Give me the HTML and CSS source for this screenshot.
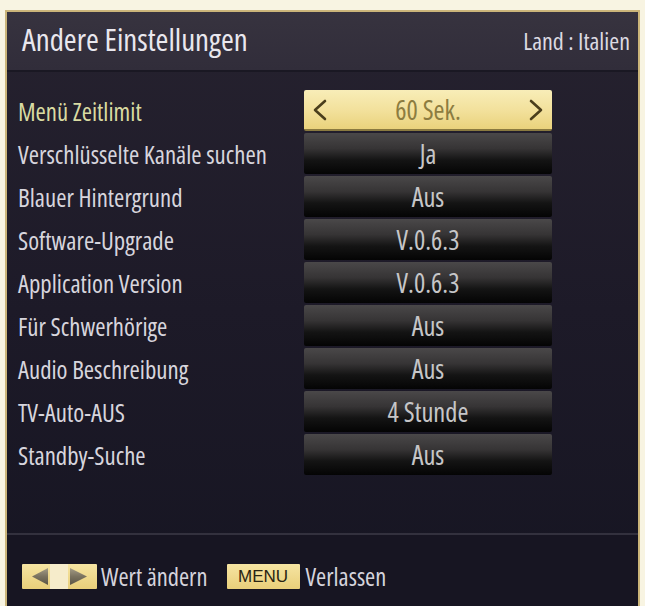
FILE: index.html
```html
<!DOCTYPE html>
<html lang="de">
<head>
<meta charset="utf-8">
<title>Andere Einstellungen</title>
<link rel="stylesheet" href="styles.css">
</head>
<body>
<div class="screen">
  <header class="header">
    <h1 class="title">Andere Einstellungen</h1>
    <div class="country">Land : Italien</div>
  </header>
  <main class="body">
    <div class="row active">
      <div class="label">Menü Zeitlimit</div>
      <div class="value">
        <svg class="chev" width="16" height="22" viewBox="0 0 16 22"><path d="M13 2 L3 11 L13 20" fill="none" stroke="#4a3e1c" stroke-width="2.6" stroke-linecap="round" stroke-linejoin="round"/></svg>
        <span class="vtext">60 Sek.</span>
        <svg class="chev" width="16" height="22" viewBox="0 0 16 22"><path d="M3 2 L13 11 L3 20" fill="none" stroke="#4a3e1c" stroke-width="2.6" stroke-linecap="round" stroke-linejoin="round"/></svg>
      </div>
    </div>
    <div class="row"><div class="label">Verschlüsselte Kanäle suchen</div><div class="value"><span class="vtext">Ja</span></div></div>
    <div class="row"><div class="label">Blauer Hintergrund</div><div class="value"><span class="vtext">Aus</span></div></div>
    <div class="row"><div class="label">Software-Upgrade</div><div class="value"><span class="vtext">V.0.6.3</span></div></div>
    <div class="row"><div class="label">Application Version</div><div class="value"><span class="vtext">V.0.6.3</span></div></div>
    <div class="row"><div class="label">Für Schwerhörige</div><div class="value"><span class="vtext">Aus</span></div></div>
    <div class="row"><div class="label">Audio Beschreibung</div><div class="value"><span class="vtext">Aus</span></div></div>
    <div class="row"><div class="label">TV-Auto-AUS</div><div class="value"><span class="vtext">4 Stunde</span></div></div>
    <div class="row"><div class="label">Standby-Suche</div><div class="value"><span class="vtext">Aus</span></div></div>
  </main>
  <footer class="footer">
    <div class="key arrows">
      <svg width="75" height="25" viewBox="0 0 75 25">
        <defs>
          <linearGradient id="tri" x1="0" y1="0" x2="0" y2="1">
            <stop offset="0" stop-color="#a49c86"/>
            <stop offset="0.5" stop-color="#7a725f"/>
            <stop offset="1" stop-color="#5c5545"/>
          </linearGradient>
        </defs>
        <rect x="28" y="0" width="18" height="25" fill="#f6eccb"/>
        <path d="M26 4 L10 12.5 L26 21 Z" fill="url(#tri)"/>
        <path d="M48 4 L65 12.5 L48 21 Z" fill="url(#tri)"/>
      </svg>
    </div>
    <span class="hint">Wert ändern</span>
    <div class="key menu">MENU</div>
    <span class="hint">Verlassen</span>
  </footer>
</div>
</body>
</html>
```

FILE: styles.css
```css
html, body {
  margin: 0;
  padding: 0;
}
body {
  background: #f8f4e2;
  width: 645px;
  height: 606px;
  overflow: hidden;
  font-family: "Open Sans", "DejaVu Sans Condensed", sans-serif;
  font-stretch: 75%;
}
.screen {
  margin: 10px 0 0 5px;
  width: 631px;
  height: 596px;
  border: 2px solid #cbb57a;
  border-bottom: 0;
  background: linear-gradient(to bottom, #26222f 0%, #1d1a28 50%, #161522 100%);
  display: flex;
  flex-direction: column;
}
.header {
  height: 58px;
  flex: none;
  background: linear-gradient(to bottom, #37333f, #312d3a);
  border-bottom: 2px solid #1a1823;
  display: flex;
  align-items: center;
  justify-content: space-between;
  padding: 0 8px 0 15px;
  white-space: nowrap;
}
.title {
  margin: 0;
  font-weight: 500;
  font-size: 31px;
  color: #e9e7ee;
  padding-bottom: 4px;
}
.country {
  font-size: 24px;
  font-weight: 500;
  color: #dcdae2;
  padding-bottom: 2px;
}
.body {
  flex: none;
  height: 443px;
  padding-top: 18px;
  display: flex;
  flex-direction: column;
  gap: 2px;
}
.row {
  display: flex;
  align-items: center;
  height: 41px;
}
.label {
  width: 286px;
  padding-left: 11px;
  font-size: 24.8px;
  font-weight: 500;
  color: #d7d5dd;
  white-space: nowrap;
}
.row.active .label {
  color: #d9dba2;
}
.value {
  width: 248px;
  height: 41px;
  box-sizing: border-box;
  border-radius: 2px;
  background: linear-gradient(to bottom, #4a4849 0%, #363435 38%, #141414 66%, #040404 100%);
  display: flex;
  align-items: center;
  justify-content: center;
}
.vtext {
  font-size: 26.5px;
  font-weight: 500;
  color: #c6c6c8;
  white-space: nowrap;
}
.row.active .value {
  background: linear-gradient(to bottom, #f8edb8 0%, #f2e09a 55%, #e9d27c 100%);
  border-bottom: 2px solid #8a7a40;
  justify-content: space-between;
  padding: 0 8px 0 8px;
}
.row.active .vtext {
  color: #8c7c40;
}
.chev {
  display: block;
}
.footer {
  flex: 1;
  border-top: 2px solid #33313e;
  background: #171522;
  display: flex;
  align-items: flex-start;
  padding: 29px 0 0 15px;
  white-space: nowrap;
}
.key {
  height: 25px;
  background: linear-gradient(to bottom, #f6e4a2, #e9cf7a);
  border-radius: 1px;
}
.arrows {
  width: 75px;
}
.arrows svg {
  display: block;
}
.hint {
  font-size: 24.5px;
  font-weight: 500;
  color: #d5d3dc;
  line-height: 25px;
  margin-left: 4px;
}
.menu {
  margin-left: 19px;
  width: 73px;
  display: flex;
  align-items: center;
  justify-content: center;
  font-family: "Liberation Sans", sans-serif;
  font-stretch: normal;
  font-size: 17px;
  color: #2a2412;
}
.menu + .hint {
  margin-left: 6px;
}
```
